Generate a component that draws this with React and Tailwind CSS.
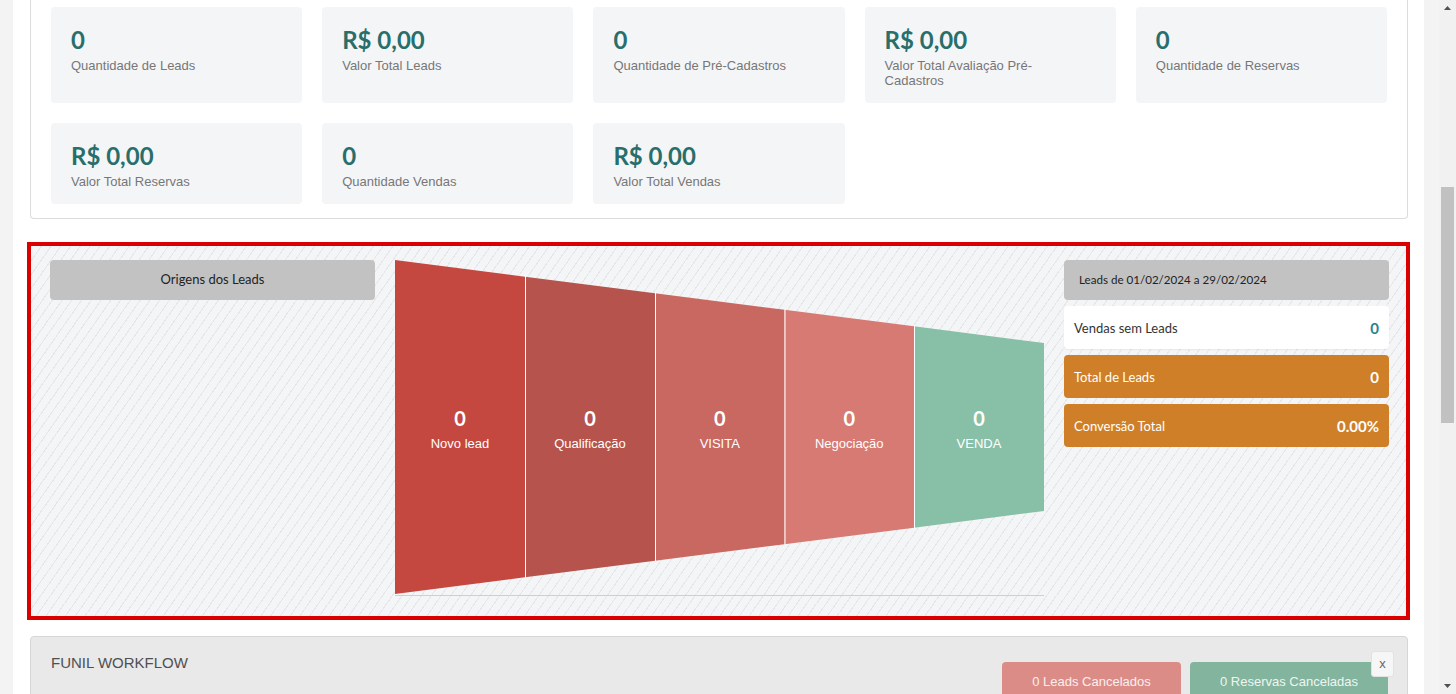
import React from "react";

const stats = [
  { v: "0", l: "Quantidade de Leads" },
  { v: "R$ 0,00", l: "Valor Total Leads" },
  { v: "0", l: "Quantidade de Pré-Cadastros" },
  { v: "R$ 0,00", l: "Valor Total Avaliação Pré-Cadastros" },
  { v: "0", l: "Quantidade de Reservas" },
  { v: "R$ 0,00", l: "Valor Total Reservas" },
  { v: "0", l: "Quantidade Vendas" },
  { v: "R$ 0,00", l: "Valor Total Vendas" },
];

const xs = [0, 130, 260, 389.5, 519, 649];
const top = (x) => (83 * x) / 649;
const bot = (x) => 334 - (83 * x) / 649;
const segs = [
  { c: "#c4483f", n: "Novo lead" },
  { c: "#b5534c", n: "Qualificação" },
  { c: "#c96761", n: "VISITA" },
  { c: "#d77a73", n: "Negociação" },
  { c: "#88bfa7", n: "VENDA" },
];

function Funnel() {
  return (
    <svg width="649" height="336" viewBox="0 0 649 336" className="block">
      {segs.map((s, i) => {
        const a = xs[i];
        const b = xs[i + 1];
        const pts = `${a},${top(a)} ${b},${top(b)} ${b},${bot(b)} ${a},${bot(a)}`;
        return <polygon key={i} points={pts} fill={s.c} />;
      })}
      {xs.slice(1, 5).map((x, i) => (
        <line key={i} x1={x + 0.5} x2={x + 0.5} y1={top(x) - 1} y2={bot(x) + 1} stroke="#ffffff" strokeWidth="1" />
      ))}
      <line x1="0" x2="649" y1="335.5" y2="335.5" stroke="#cfcfcf" strokeWidth="1" />
      {segs.map((s, i) => {
        const cx = (xs[i] + xs[i + 1]) / 2;
        return (
          <g key={i} fill="#ffffff" textAnchor="middle">
            <text x={cx} y="166" fontFamily="Lato, sans-serif" fontWeight="700" fontSize="20">
              0
            </text>
            <text x={cx} y="187.5" fontFamily="'Liberation Sans', Arial, sans-serif" fontSize="13">
              {s.n}
            </text>
          </g>
        );
      })}
    </svg>
  );
}

export default function App() {
  return (
    <div className="flex h-[694px] w-[1456px] overflow-hidden bg-white font-['Liberation_Sans',Arial,sans-serif]">
      <div className="w-[13px] shrink-0 bg-[#f3f3f3]" />
      <div className="flex w-[1411px] shrink-0 flex-col bg-white px-[16px] pl-[17px]">
        {/* Top stats card */}
        <div className="rounded-b-[4px] border-x border-b border-[#dcdcdc] px-[20px] pt-[7px] pb-[14px]">
          <div className="grid grid-cols-5 gap-[20px]">
            {stats.map((s, i) => (
              <div key={i} className="rounded-[4px] bg-[#f4f5f7] pt-[19px] pr-[30px] pb-[15px] pl-[20px]">
                <div className="font-['Lato',sans-serif] text-[24px] leading-[28.8px] font-bold text-[#286e6a]">{s.v}</div>
                <div className="mt-[3px] text-[13px] leading-[15px] text-[#777777]">{s.l}</div>
              </div>
            ))}
          </div>
        </div>

        {/* Highlighted funnel section */}
        <div className="mt-[23px] -ml-[3px] -mr-[2px] border-[4px] border-[#da0000] bg-[repeating-linear-gradient(125deg,#e4e6e9_0px,#e4e6e9_1px,#f4f5f7_1px,#f4f5f7_8px)] pt-[14px] pb-[20px] pl-[19px] pr-[17px]">
          <div className="flex gap-[20px]">
            <div className="w-[325px] shrink-0">
              <div className="flex h-[40px] items-center justify-center rounded-[4px] bg-[#c2c2c2] font-['Lato',sans-serif] text-[13px] text-[#222222]">
                Origens dos Leads
              </div>
            </div>
            <div className="w-[649px] shrink-0">
              <Funnel />
            </div>
            <div className="flex w-[325px] shrink-0 flex-col gap-[6px] font-['Lato',sans-serif]">
              <div className="flex h-[40px] items-center rounded-[4px] bg-[#c2c2c2] pl-[15px] text-[11.6px] text-[#222222]">
                Leads de 01/02/2024 a 29/02/2024
              </div>
              <div className="flex h-[43px] items-center justify-between rounded-[4px] bg-white px-[10px] pt-[3px] shadow-[0_1px_2px_rgba(0,0,0,0.06)]">
                <span className="text-[13px] text-[#333333]">Vendas sem Leads</span>
                <span className="text-[15px] font-bold text-[#2f7f8f]">0</span>
              </div>
              <div className="flex h-[43px] items-center justify-between rounded-[4px] bg-[#cf7f27] px-[10px] pt-[3px] text-white">
                <span className="text-[13px]">Total de Leads</span>
                <span className="text-[15px] font-bold">0</span>
              </div>
              <div className="flex h-[43px] items-center justify-between rounded-[4px] bg-[#cf7f27] px-[10px] pt-[3px] text-white">
                <span className="text-[13px]">Conversão Total</span>
                <span className="text-[15px] font-bold">0.00%</span>
              </div>
            </div>
          </div>
        </div>

        {/* Funil workflow */}
        <div className="relative mt-[16px] flex h-[80px] items-start justify-between rounded-tl-[4px] rounded-tr-[4px] border border-[#d6d6d6] bg-[#e9e9e9] pl-[20px] pr-[19px]">
          <div className="mt-[17px] text-[15px] leading-[17px] text-[#505050]">FUNIL WORKFLOW</div>
          <div className="mt-[25px] flex gap-[9px]">
            <div className="flex h-[40px] w-[179px] items-center justify-center rounded-t-[4px] bg-[#db8c87] text-[13px] text-[#fcefee]">
              0 Leads Cancelados
            </div>
            <div className="flex h-[40px] w-[198px] items-center justify-center rounded-t-[4px] bg-[#82b49e] text-[13px] text-[#eef6f2]">
              0 Reservas Canceladas
            </div>
          </div>
          <div className="absolute top-[14px] right-[13px] flex h-[26px] w-[23px] items-center justify-center rounded-[3px] border border-[#e2e2e2] bg-[#f6f6f6] text-[13px] text-[#666666]">
            x
          </div>
        </div>
      </div>
      <div className="w-[15px] shrink-0 bg-[#f3f3f3]" />
      {/* scrollbar */}
      <div className="flex w-[17px] shrink-0 flex-col items-center bg-[#f1f1f1]">
        <svg width="17" height="17" viewBox="0 0 17 17" className="block">
          <polygon points="5,10 12,10 8.5,6" fill="#505050" />
        </svg>
        <div className="mt-[170px] h-[236px] w-[13px] bg-[#c1c1c1]" />
        <div className="flex-1" />
        <svg width="17" height="17" viewBox="0 0 17 17" className="block">
          <polygon points="5,7 12,7 8.5,11" fill="#505050" />
        </svg>
      </div>
    </div>
  );
}
